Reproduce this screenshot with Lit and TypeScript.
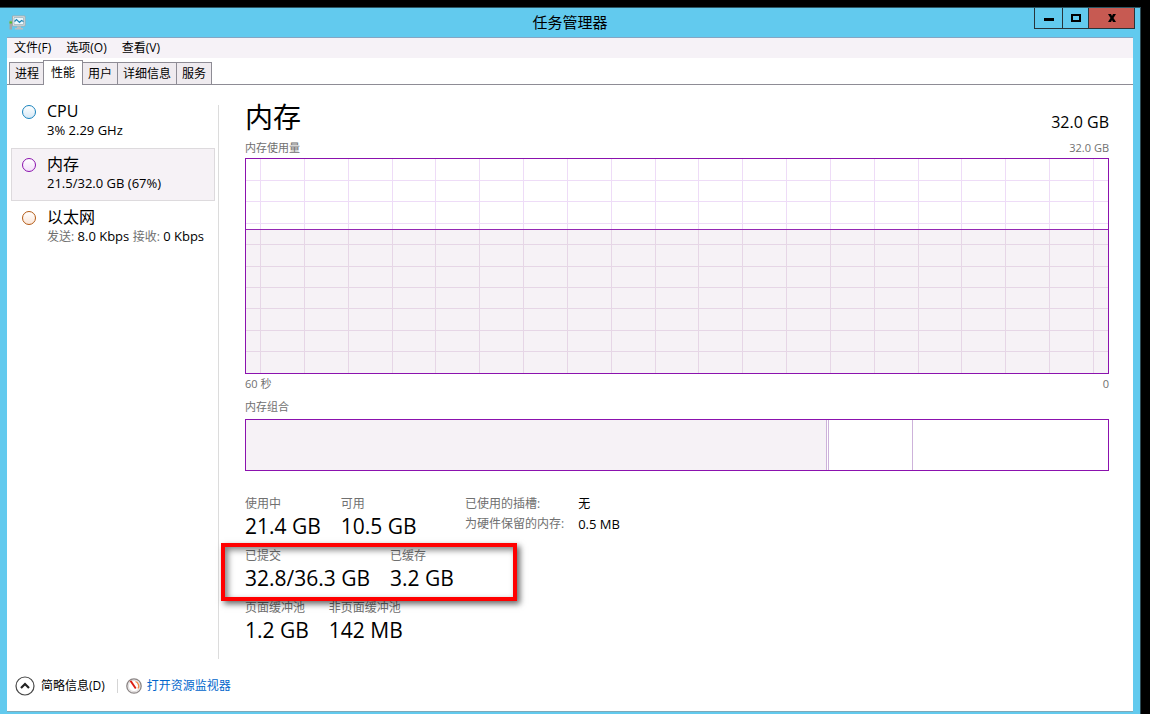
import { LitElement, html, svg, css } from "lit";
import { customElement, property, state } from "lit/decorators.js";
import { classMap } from "lit/directives/class-map.js";

const base = css`
  * { box-sizing: border-box; }
  button { font: inherit; color: inherit; margin: 0; cursor: default; }
`;

@customElement("usage-chart")
class UsageChart extends LitElement {
  @property({ type: Number }) used = 0;

  static styles = [base, css`
    :host { display: block; height: 216px; border: 1px solid #8b12ae; background: #fff; }
    .plot { display: block; width: 100%; height: 100%; }
    .fill { fill: #f6f2f6; }
    .grid { stroke: #eedcf7; }
    .grid-used { stroke: #e6d6e6; }
    .level { stroke: #9528b4; }
    .plot line { stroke-width: 1; shape-rendering: crispEdges; }
  `];

  render() {
    const free = 100 - this.used;
    const cols = Array.from({ length: 20 }, (_, i) => 1.7 + i * 5.085);
    const rows = Array.from({ length: 9 }, (_, i) => 10 + i * 10);
    return html`<svg class="plot" role="img" aria-label="内存使用量">
      <rect class="fill" x="0" y="${free}%" width="100%" height="${this.used}%"></rect>
      ${cols.map((x) => svg`
        <line class="grid" x1="${x}%" x2="${x}%" y1="0" y2="${free}%"></line>
        <line class="grid-used" x1="${x}%" x2="${x}%" y1="${free}%" y2="100%"></line>`)}
      ${rows.map((y) => svg`
        <line class=${y < free ? "grid" : "grid-used"} x1="0" x2="100%" y1="${y}%" y2="${y}%"></line>`)}
      <line class="level" x1="0" x2="100%" y1="${free}%" y2="${free}%"></line>
    </svg>`;
  }
}

@customElement("app-root")
class AppRoot extends LitElement {
  @state() private tab = "性能";
  @state() private device = "mem";

  static styles = [base, css`
    :host {
      display: flex; flex-direction: column; min-height: 100vh; box-sizing: border-box;
      padding: 7px 9px 0 0; background: #000; color: #000;
      font: 12px/16px "Open Sans", "Noto Sans CJK SC", sans-serif;
    }
    .window {
      flex: 1; display: flex; flex-direction: column; padding: 0 7px 2px;
      background: #62caee; border-top: 1px solid #2b5563; border-right: 1px solid #2b4a55;
    }
    .titlebar { display: grid; grid-template-columns: 1fr auto 1fr; height: 29px; }
    .app-icon { display: block; width: 18px; height: 16px; margin: 7px 0 0 1px; }
    .title { margin: 0; font-size: 15px; line-height: 28px; font-weight: 400; }
    .controls { display: flex; justify-self: end; align-items: flex-start; margin-right: -2px; }
    .control {
      display: grid; place-items: center; width: 28px; height: 21px; padding: 0;
      background: none; border: 1px solid #28343a; border-top: 0; border-right: 0;
    }
    .control svg { display: block; }
    .maximize { width: 26px; }
    .close { width: 47px; background: #c75a52; border-right: 1px solid #28343a; }
    .client {
      flex: 1; display: flex; flex-direction: column; background: #fff;
      border-top: 1px solid #84a6c4; border-bottom: 1px solid #7fa9b8;
    }
    .menubar { display: flex; gap: 15px; padding: 0 7px; background: #f6f2f7; }
    .menu { padding: 0; line-height: 20px; background: none; border: 0; }
    .tabs {
      display: flex; align-items: flex-end; height: 27px; padding-left: 2px;
      border-bottom: 1px solid #8e8c95;
    }
    .tab {
      height: 22px; padding: 0 5px; line-height: 20px; background: #efebef;
      border: 1px solid #8e8c95; border-bottom: 0; margin-right: -1px;
    }
    .tab.on {
      height: 25px; padding: 0 7px; line-height: 22px; background: #fff;
      margin: 0 -1px -1px -1px; z-index: 1;
    }
    .body { flex: 1; display: flex; padding-top: 10px; }
    .sidebar {
      flex: none; width: 211px; padding: 0 3px 0 4px; margin-bottom: 2px;
      display: flex; flex-direction: column;
    }
    .device {
      display: grid; grid-template-columns: 14px 1fr; column-gap: 11px; text-align: left;
      padding: 5px 4px 8px 10px; background: none; border: 1px solid transparent;
      white-space: nowrap;
    }
    .device.on { background: #f6f2f6; border-color: #dddadd; }
    .dot { width: 14px; height: 14px; margin-top: 4px; border-radius: 50%; border: 1px solid; }
    .cpu { border-color: #1883bd; background: linear-gradient(#fff, #d5e8f6); }
    .mem { border-color: #8b12ae; background: linear-gradient(#fff, #f3e0fa); }
    .net { border-color: #b35a14; background: linear-gradient(#fff, #fbe6d8); }
    .name { display: block; font-size: 16px; line-height: 20px; }
    .info { display: block; font-size: 13px; line-height: 18px; }
    .dim { font-size: 12px; color: #707070; }
    .divider { width: 1px; margin: 10px 0 2px; background: #dcdcdc; }
    .main { flex: 1; min-width: 0; padding: 3px 24px 0 26px; }
    .row { display: flex; justify-content: space-between; align-items: baseline; }
    .heading { margin: 0; font-size: 28px; line-height: 38px; font-weight: 400; }
    .total { font-size: 16px; }
    .caption { font-size: 11px; color: #707070; }
    .above { padding: 4px 0 2px; }
    .below { padding: 2px 0 7px; }
    .composition { padding-bottom: 4px; }
    .bar { display: flex; height: 52px; border: 1px solid #8b12ae; }
    .part { border-right: 1px solid #cdb2da; }
    .in-use { background: #f6f2f6; }
    .stats { display: flex; margin-top: 23px; }
    .counters { position: relative; width: 220px; display: grid; row-gap: 8px; }
    .line { display: flex; gap: 20px; white-space: nowrap; margin: 0; }
    .line dt, .facts th { line-height: 20px; color: #707070; font-weight: 400; }
    .line dd { margin: 0; font-size: 21px; line-height: 24px; }
    .facts { align-self: flex-start; border-collapse: collapse; text-align: left; white-space: nowrap; }
    .facts th { padding: 0 14px 0 0; }
    .facts td { padding: 0; line-height: 20px; }
    .amount { font-size: 13px; }
    .highlight {
      position: absolute; left: -24px; top: 49px; width: 296px; height: 58px;
      border: 4px solid #f00; pointer-events: none;
      box-shadow: 3px 3px 6px rgba(0, 0, 0, .6), inset 3px 3px 6px rgba(0, 0, 0, .5);
    }
    .footer { display: flex; align-items: center; height: 50px; padding-left: 8px; }
    .less { display: flex; align-items: center; gap: 6px; padding: 0; background: none; border: 0; }
    .less svg, .monitor svg { display: block; }
    .sep { width: 1px; height: 14px; margin: 0 8px 0 12px; background: #d5d5d5; }
    .monitor { display: flex; align-items: center; gap: 5px; color: #0066cc; text-decoration: none; }
  `];

  private deviceButton(id: string, name: string, info: unknown) {
    return html`<button class=${classMap({ device: true, on: this.device === id })}
      @click=${() => (this.device = id)}>
      <span class="dot ${id}"></span>
      <span><span class="name">${name}</span><span class="info">${info}</span></span>
    </button>`;
  }

  private counters(items: string[][]) {
    return html`<dl class="line">${items.map(([k, v]) => html`<div><dt>${k}</dt><dd>${v}</dd></div>`)}</dl>`;
  }

  render() {
    return html`<div class="window">
      <header class="titlebar">
        <svg class="app-icon" viewBox="0 0 18 16" aria-hidden="true">
          <path d="M4.500 1h12.500v10H4.500z" fill="#eceeee" stroke="#a3acb0"/>
          <path d="M6 2.500h9.500v7H6z" fill="#e8f8fe" stroke="#9db4bd" stroke-width=".8"/>
          <path d="M6.500 6.500l2-2 3 3 2-2 2 1" fill="none" stroke="#1d85b5" stroke-width="1.200"/>
          <path d="M9 11.500h4v1.500h2v1.500H7V13h2z" fill="#b9bec0"/>
          <path d="M1.500 5.500h2.500v9H1.500z" fill="#a4a6a5"/><path d="M1.500 6.500h2.500v2H1.500z" fill="#4ec52b"/>
        </svg>
        <h1 class="title">任务管理器</h1>
        <div class="controls">
          <button class="control" aria-label="最小化"><svg width="12" height="10"><path d="M1 5h10v3H1z"/></svg></button>
          <button class="control maximize" aria-label="最大化"><svg width="12" height="10"><path d="M2 2h8v6H2z" fill="none" stroke="#000" stroke-width="2"/></svg></button>
          <button class="control close" aria-label="关闭"><svg width="10" height="8"><path d="M1 0h3l1 2 1-2h3L6.500 4 9 8H6L5 6 4 8H1l2.500-4z"/></svg></button>
        </div>
      </header>
      <div class="client">
        <nav class="menubar">
          ${["文件(F)", "选项(O)", "查看(V)"].map((m) => html`<button class="menu">${m}</button>`)}
        </nav>
        <div class="tabs" role="tablist">
          ${["进程", "性能", "用户", "详细信息", "服务"].map((t) => html`<button role="tab"
            aria-selected=${t === this.tab} class=${classMap({ tab: true, on: t === this.tab })}
            @click=${() => (this.tab = t)}>${t}</button>`)}
        </div>
        <div class="body">
          <div class="sidebar">
            ${this.deviceButton("cpu", "CPU", "3% 2.29 GHz")}
            ${this.deviceButton("mem", "内存", "21.5/32.0 GB (67%)")}
            ${this.deviceButton("net", "以太网", html`<span class="dim">发送:</span> 8.0 Kbps <span class="dim">接收:</span> 0 Kbps`)}
          </div>
          <div class="divider"></div>
          <main class="main">
            <div class="row"><h2 class="heading">内存</h2><span class="total">32.0 GB</span></div>
            <div class="row caption above"><span>内存使用量</span><span>32.0 GB</span></div>
            <usage-chart .used=${67}></usage-chart>
            <div class="row caption below"><span>60 秒</span><span>0</span></div>
            <div class="caption composition">内存组合</div>
            <div class="bar">
              <div class="part in-use" style="width:67.4%"></div>
              <div class="part" style="width:.2%"></div>
              <div class="part" style="width:9.8%"></div>
            </div>
            <div class="stats">
              <div class="counters">
                ${this.counters([["使用中", "21.4 GB"], ["可用", "10.5 GB"]])}
                ${this.counters([["已提交", "32.8/36.3 GB"], ["已缓存", "3.2 GB"]])}
                ${this.counters([["页面缓冲池", "1.2 GB"], ["非页面缓冲池", "142 MB"]])}
                <div class="highlight"></div>
              </div>
              <table class="facts">
                <tr><th scope="row">已使用的插槽:</th><td>无</td></tr>
                <tr><th scope="row">为硬件保留的内存:</th><td class="amount">0.5 MB</td></tr>
              </table>
            </div>
          </main>
        </div>
        <footer class="footer">
          <button class="less">
            <svg width="20" height="20" viewBox="0 0 20 20" aria-hidden="true">
              <circle cx="10" cy="10" r="9" fill="#fff" stroke="#484848" stroke-width="1.200"/>
              <path d="M6 12l4-4 4 4" fill="none" stroke="#222" stroke-width="2.200"/>
            </svg>简略信息(D)</button>
          <span class="sep"></span>
          <a class="monitor" href="#">
            <svg width="16" height="16" viewBox="0 0 16 16" aria-hidden="true">
              <circle cx="8" cy="8" r="7.200" fill="#f1efef" stroke="#8b8585" stroke-width="1.300"/>
              <circle cx="8" cy="8" r="5.600" fill="#fff" stroke="#cfc8c8" stroke-width=".6"/>
              <path d="M9.500 3.500a4.800 4.800 0 0 1 2.500 7" fill="none" stroke="#ee8a4a" stroke-width="1.300"/>
              <path d="M3.500 3l2-.5 5 7.500-1.500 1z" fill="#dc1c10"/>
            </svg>打开资源监视器</a>
        </footer>
      </div>
    </div>`;
  }
}
